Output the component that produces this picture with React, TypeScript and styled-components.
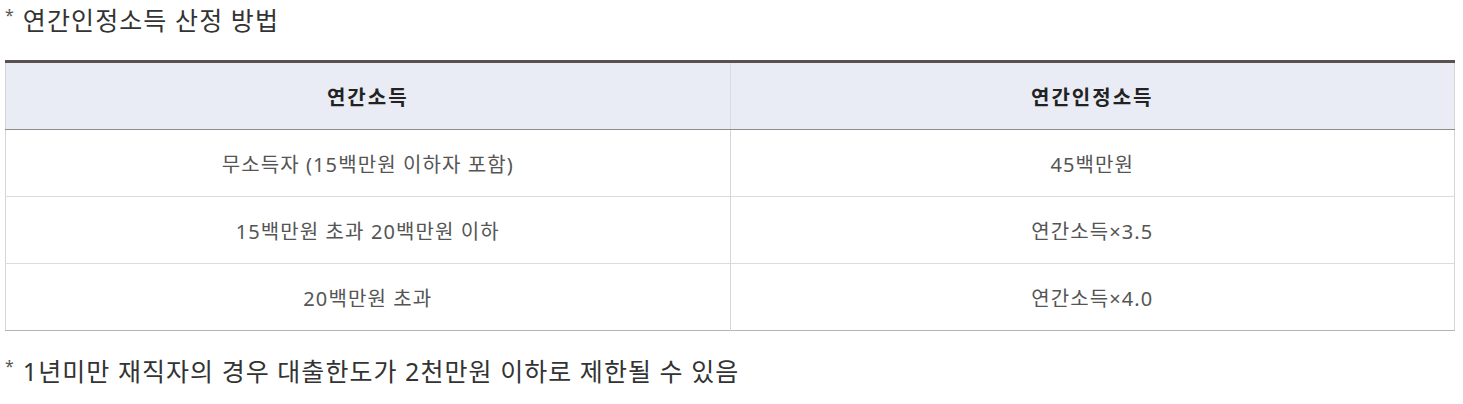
import React from 'react';
import styled, { createGlobalStyle } from 'styled-components';

const GlobalStyle = createGlobalStyle`
  body {
    margin: 0;
    background: #fff;
    font-family: "Noto Sans", "Noto Sans CJK KR", sans-serif;
    color: #333;
  }
`;

const Page = styled.div`
  padding: 0 8px 0 5px;
`;

const Note = styled.p<{ top?: number; spacing?: number }>`
  margin: ${({ top }) => top ?? 0}px 0 0;
  height: 37px;
  display: flex;
  align-items: center;
  font-size: 25px;
  letter-spacing: ${({ spacing }) => spacing ?? 1.3}px;
  color: #333;
`;

const Star = styled.span`
  font-size: 16px;
  align-self: flex-start;
  margin-top: 4px;
  margin-right: 9px;
  letter-spacing: 0;
  color: #555;
`;

const Table = styled.table`
  width: 100%;
  border-collapse: collapse;
  table-layout: fixed;
  border-top: 3px solid #5a504d;
  border-bottom: 1px solid #b5b5b5;
  border-left: 1px solid #d6d6d6;
  border-right: 1px solid #d6d6d6;
  margin-top: 23px;
`;

const HeadCell = styled.th`
  height: 66px;
  padding: 0;
  background: #e9ecf4;
  border-bottom: 1px solid #8c8c8c;
  border-left: 1px solid #dcdcdc;
  font-size: 20px;
  font-weight: 700;
  letter-spacing: 2px;
  color: #222;
  text-align: center;
  &:first-child {
    border-left: none;
  }
`;

const Cell = styled.td`
  height: 66px;
  padding: 0;
  border-top: 1px solid #dcdcdc;
  border-left: 1px solid #d6d6d6;
  font-size: 20px;
  letter-spacing: 1.1px;
  color: #555;
  text-align: center;
  &:first-child {
    border-left: none;
  }
`;

const rows: [string, string][] = [
  ['무소득자 (15백만원 이하자 포함)', '45백만원'],
  ['15백만원 초과 20백만원 이하', '연간소득×3.5'],
  ['20백만원 초과', '연간소득×4.0'],
];

export default function App() {
  return (
    <Page>
      <GlobalStyle />
      <Note spacing={1.1}>
        <Star>*</Star>연간인정소득 산정 방법
      </Note>
      <Table>
        <thead>
          <tr>
            <HeadCell>연간소득</HeadCell>
            <HeadCell>연간인정소득</HeadCell>
          </tr>
        </thead>
        <tbody>
          {rows.map(([income, recognized]) => (
            <tr key={income}>
              <Cell>{income}</Cell>
              <Cell>{recognized}</Cell>
            </tr>
          ))}
        </tbody>
      </Table>
      <Note top={20} spacing={1.05}>
        <Star>*</Star>1년미만 재직자의 경우 대출한도가 2천만원 이하로 제한될 수 있음
      </Note>
    </Page>
  );
}
